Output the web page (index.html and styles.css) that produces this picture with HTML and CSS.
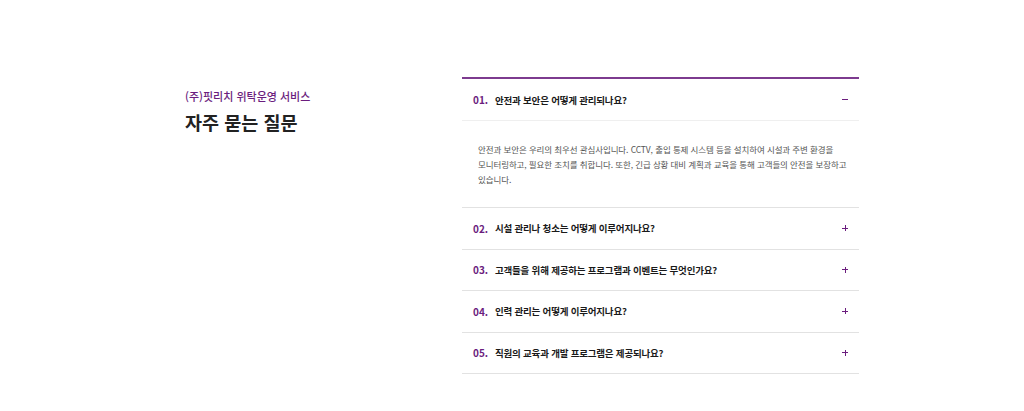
FILE: index.html
```html
<!DOCTYPE html>
<html lang="ko">
<head>
<meta charset="utf-8">
<title>자주 묻는 질문</title>
<link rel="stylesheet" href="styles.css">
</head>
<body>
<section class="faq">
  <div class="faq-head">
    <p class="faq-sub">(주)핏리치 위탁운영 서비스</p>
    <h2 class="faq-title">자주 묻는 질문</h2>
  </div>
  <div class="faq-list">
    <div class="faq-item open">
      <div class="faq-q">
        <span class="faq-num">01.</span>
        <span class="faq-text">안전과 보안은 어떻게 관리되나요?</span>
        <span class="faq-icon minus"></span>
      </div>
      <div class="faq-a">
        <p>안전과 보안은 우리의 최우선 관심사입니다. CCTV, 출입 통제 시스템 등을 설치하여 시설과 주변 환경을 모니터링하고, 필요한 조치를 취합니다. 또한, 긴급 상황 대비 계획과 교육을 통해 고객들의 안전을 보장하고 있습니다.</p>
      </div>
    </div>
    <div class="faq-item">
      <div class="faq-q">
        <span class="faq-num">02.</span>
        <span class="faq-text">시설 관리나 청소는 어떻게 이루어지나요?</span>
        <span class="faq-icon plus"></span>
      </div>
    </div>
    <div class="faq-item">
      <div class="faq-q">
        <span class="faq-num">03.</span>
        <span class="faq-text">고객들을 위해 제공하는 프로그램과 이벤트는 무엇인가요?</span>
        <span class="faq-icon plus"></span>
      </div>
    </div>
    <div class="faq-item">
      <div class="faq-q">
        <span class="faq-num">04.</span>
        <span class="faq-text">인력 관리는 어떻게 이루어지나요?</span>
        <span class="faq-icon plus"></span>
      </div>
    </div>
    <div class="faq-item">
      <div class="faq-q">
        <span class="faq-num">05.</span>
        <span class="faq-text">직원의 교육과 개발 프로그램은 제공되나요?</span>
        <span class="faq-icon plus"></span>
      </div>
    </div>
  </div>
</section>
</body>
</html>
```
FILE: styles.css
```css
html, body {
  margin: 0;
  padding: 0;
  background: #ffffff;
}
body {
  font-family: "Noto Sans CJK KR", "Noto Sans", sans-serif;
  color: #222222;
}
.faq {
  display: flex;
  padding: 77px 0 0 185px;
}
.faq-head {
  width: 277px;
  padding-top: 11px;
}
.faq-sub {
  margin: 0;
  font-size: 11px;
  line-height: 16px;
  font-weight: 500;
  color: #6b1d7e;
}
.faq-title {
  margin: 6px 0 0;
  font-size: 18.5px;
  line-height: 24px;
  font-weight: 700;
  color: #222222;
}
.faq-list {
  width: 397px;
  border-top: 2px solid #7d3b8f;
}
.faq-item {
  border-bottom: 1px solid #e2e2e2;
}
.faq-q {
  display: flex;
  align-items: center;
  height: 40.5px;
  padding: 0 11px;
}
.faq-num {
  width: 22px;
  font-size: 10px;
  font-weight: 700;
  color: #6b1d7e;
}
.faq-text {
  flex: 1;
  font-size: 9.5px;
  font-weight: 700;
  color: #1a1a1a;
  letter-spacing: -0.2px;
}
.faq-icon {
  position: relative;
  width: 6px;
  height: 6px;
}
.faq-icon::before,
.faq-icon.plus::after {
  content: "";
  position: absolute;
  background: #6b1d7e;
}
.faq-icon::before {
  left: 0;
  top: 2.5px;
  width: 6px;
  height: 1px;
}
.faq-icon.plus::after {
  left: 2.5px;
  top: 0;
  width: 1px;
  height: 6px;
}
.faq-item.open .faq-q {
  height: 41px;
  border-bottom: 1px solid #efefef;
}
.faq-a {
  padding: 21px 4px 20px 16px;
}
.faq-a p {
  margin: 0;
  font-size: 8.5px;
  line-height: 15px;
  color: #555555;
  letter-spacing: -0.1px;
  word-break: keep-all;
}
```
